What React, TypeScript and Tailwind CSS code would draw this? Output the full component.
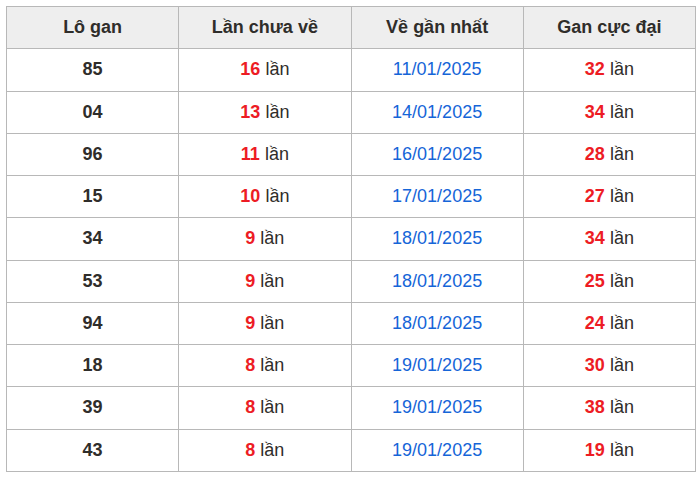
const rows = [
  { lo: "85", miss: 16, last: "11/01/2025", max: 32 },
  { lo: "04", miss: 13, last: "14/01/2025", max: 34 },
  { lo: "96", miss: 11, last: "16/01/2025", max: 28 },
  { lo: "15", miss: 10, last: "17/01/2025", max: 27 },
  { lo: "34", miss: 9, last: "18/01/2025", max: 34 },
  { lo: "53", miss: 9, last: "18/01/2025", max: 25 },
  { lo: "94", miss: 9, last: "18/01/2025", max: 24 },
  { lo: "18", miss: 8, last: "19/01/2025", max: 30 },
  { lo: "39", miss: 8, last: "19/01/2025", max: 38 },
  { lo: "43", miss: 8, last: "19/01/2025", max: 19 },
];

const cell = "h-[42.25px] border border-[#b8b8b8] p-0 text-center align-middle";

export default function App() {
  return (
    <div className="min-h-[478px] w-[700px] bg-white p-[6px] font-['Liberation_Sans',Arial,sans-serif] text-[18px] text-[#2f2d2a]">
      <table className="w-[690px] table-fixed border-collapse">
        <thead>
          <tr className="bg-[#eeeeee]">
            <th className={cell + " font-bold"}>Lô gan</th>
            <th className={cell + " font-bold"}>Lần chưa về</th>
            <th className={cell + " font-bold"}>Về gần nhất</th>
            <th className={cell + " font-bold"}>Gan cực đại</th>
          </tr>
        </thead>
        <tbody>
          {rows.map((r) => (
            <tr key={r.lo}>
              <td className={cell + " font-bold"}>{r.lo}</td>
              <td className={cell}>
                <span className="font-bold text-[#ed1c24]">{r.miss}</span> lần
              </td>
              <td className={cell + " text-[#1565d8]"}>{r.last}</td>
              <td className={cell}>
                <span className="font-bold text-[#ed1c24]">{r.max}</span> lần
              </td>
            </tr>
          ))}
        </tbody>
      </table>
    </div>
  );
}
